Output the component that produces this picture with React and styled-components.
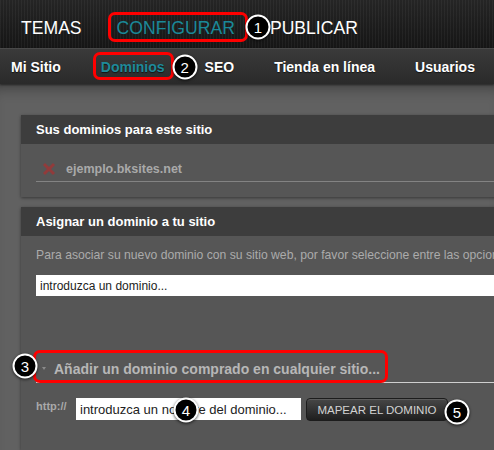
import React from 'react';
import styled, { createGlobalStyle } from 'styled-components';

const GlobalStyle = createGlobalStyle`
  html, body {
    margin: 0;
    padding: 0;
    background: #616161;
    overflow: hidden;
  }
  body {
    font-family: "Liberation Sans", Arial, Helvetica, sans-serif;
  }
  * { box-sizing: border-box; }
`;

const Page = styled.div`
  width: 494px;
  height: 450px;
  overflow: hidden;
  display: flex;
  flex-direction: column;
  background: #616161;
`;

/* ---------- primary navigation ---------- */
const TopBar = styled.nav`
  flex: none;
  height: 49px;
  display: flex;
  align-items: center;
  gap: 35px;
  padding: 8px 0 0 21px;
  background:
    repeating-linear-gradient(90deg, rgba(255, 255, 255, 0.045) 0 1px, transparent 1px 3px),
    linear-gradient(#252525, #151515);
  border-bottom: 1px solid #4c4c4c;
`;

const TopLink = styled.span`
  position: relative;
  font-size: 17.6px;
  line-height: 20px;
  color: ${(p) => (p.$active ? '#1a8999' : '#ffffff')};
`;

/* ---------- secondary navigation ---------- */
const SubNav = styled.nav`
  flex: none;
  height: 35px;
  display: flex;
  align-items: center;
  gap: 40px;
  padding: 1px 0 0 11px;
  background: linear-gradient(#3a3a3a, #2a2a2a);
  box-shadow: 0 1px 2px rgba(0, 0, 0, 0.5);
  position: relative;
  z-index: 1;
`;

const SubLink = styled.span`
  position: relative;
  font-size: 14px;
  line-height: 16px;
  font-weight: bold;
  color: ${(p) => (p.$active ? '#1f8a99' : '#ffffff')};
  text-shadow: 0 1px 1px rgba(0, 0, 0, 0.6);
`;

/* ---------- annotation marks ---------- */
const Marked = styled.span`
  position: relative;
  display: ${(p) => p.$display || 'inline-block'};

  &::after {
    content: '';
    position: absolute;
    inset: ${(p) => p.$inset};
    border: 3px solid #ff0000;
    border-radius: 7px;
    pointer-events: none;
  }
`;

const Callout = styled.span`
  position: absolute;
  left: ${(p) => p.$left};
  top: ${(p) => p.$top || '50%'};
  transform: translate(-50%, -50%);
  width: 25px;
  height: 25px;
  border-radius: 50%;
  background: #000;
  border: 2px solid #fff;
  box-shadow: 0 1px 3px rgba(0, 0, 0, 0.7);
  color: #fff;
  font-family: "Liberation Sans", Arial, sans-serif;
  font-weight: normal;
  font-size: 15px;
  line-height: 21px;
  text-align: center;
  text-shadow: none;
  z-index: 5;
`;

/* ---------- content ---------- */
const Main = styled.main`
  flex: 1;
  display: flex;
  flex-direction: column;
  gap: 10px;
  padding: 31px 0 0 21px;
  background: #616161;
  box-shadow: inset 0 14px 14px -10px rgba(0, 0, 0, 0.35);
`;

const Panel = styled.section`
  margin-right: -60px;
  background: #565656;
  box-shadow: 0 1px 3px rgba(0, 0, 0, 0.45);
  ${(p) => p.$grow && 'flex: 1;'}
`;

const PanelHeader = styled.header`
  height: 29px;
  display: flex;
  align-items: center;
  padding-left: 15px;
  background: #3d3d3d;
  color: #ffffff;
  font-size: 13px;
  font-weight: bold;
`;

const PanelBody = styled.div`
  padding: ${(p) => p.$pad};
`;

const DomainRow = styled.div`
  height: 25px;
  display: flex;
  align-items: center;
  gap: 10px;
  padding-left: 6px;
  border-bottom: 1px solid #838383;
`;

const DomainName = styled.span`
  font-size: 12.5px;
  font-weight: bold;
  color: #a9a9a9;
`;

const Description = styled.p`
  margin: 0;
  font-size: 12.2px;
  line-height: 14px;
  color: #ababab;
  white-space: nowrap;
`;

const TextField = styled.input`
  display: block;
  width: ${(p) => p.$width || '100%'};
  height: ${(p) => p.$height || '21px'};
  margin: ${(p) => p.$margin || '0'};
  padding: 0 4px;
  border: none;
  outline: none;
  background: #ffffff;
  color: #222222;
  font-family: "Liberation Sans", Arial, sans-serif;
  font-size: ${(p) => p.$size || '12px'};
`;

const HeadingRow = styled.div`
  margin-top: 54px;
  height: 33px;
  display: flex;
  align-items: stretch;
  border-bottom: 1px solid #cfcfcf;
`;

const HeadingInner = styled.span`
  display: flex;
  align-items: center;
  gap: 8px;
  padding: 5px 0 0 6px;
  font-size: 14px;
  font-weight: bold;
  color: #b7b7b7;
`;

const Caret = styled.span`
  width: 0;
  height: 0;
  border-left: 2.5px solid transparent;
  border-right: 2.5px solid transparent;
  border-top: 3px solid #8a8a8a;
`;

const FormRow = styled.div`
  margin-top: 15px;
  display: flex;
  align-items: flex-start;
`;

const Prefix = styled.span`
  width: 40px;
  padding-top: 2px;
  font-size: 11px;
  font-weight: bold;
  color: #a9a9a9;
`;

const FieldWrap = styled.span`
  position: relative;
  display: block;
`;

const MapButton = styled.button`
  position: relative;
  margin-left: 5px;
  width: 142px;
  height: 23px;
  padding: 0;
  border: 1px solid #1c1c1c;
  border-radius: 4px;
  background: linear-gradient(#474747, #1f1f1f);
  box-shadow: inset 0 1px 0 rgba(255, 255, 255, 0.12);
  color: #d2d2d2;
  font-family: "Liberation Sans", Arial, sans-serif;
  font-size: 11.5px;
`;

const RemoveIcon = () => (
  <svg width="14" height="14" viewBox="0 0 14 14">
    <path d="M2 2 L12 12 M12 2 L2 12" stroke="#913b3b" strokeWidth="3" strokeLinecap="butt" />
  </svg>
);

export default function App() {
  return (
    <Page>
      <GlobalStyle />
      <TopBar>
        <TopLink>TEMAS</TopLink>
        <Marked $inset="-6px -13px -4px -9px">
          <TopLink $active>CONFIGURAR</TopLink>
          <Callout $left="calc(100% + 23px)" $top="calc(50% - 1px)">1</Callout>
        </Marked>
        <TopLink>PUBLICAR</TopLink>
      </TopBar>

      <SubNav>
        <SubLink>Mi Sitio</SubLink>
        <Marked $inset="-6px -9px -4px -8px">
          <SubLink $active>Dominios</SubLink>
          <Callout $left="calc(100% + 20px)">2</Callout>
        </Marked>
        <SubLink>SEO</SubLink>
        <SubLink>Tienda en línea</SubLink>
        <SubLink>Usuarios</SubLink>
      </SubNav>

      <Main>
        <Panel>
          <PanelHeader>Sus dominios para este sitio</PanelHeader>
          <PanelBody $pad="13px 0 15px 15px">
            <DomainRow>
              <RemoveIcon />
              <DomainName>ejemplo.bksites.net</DomainName>
            </DomainRow>
          </PanelBody>
        </Panel>

        <Panel $grow>
          <PanelHeader>Asignar un dominio a tu sitio</PanelHeader>
          <PanelBody $pad="12px 0 0 15px">
            <Description>
              Para asociar su nuevo dominio con su sitio web, por favor seleccione entre las opciones siguientes.
            </Description>
            <TextField readOnly defaultValue="introduzca un dominio..." $margin="13px 0 0 0" />

            <HeadingRow>
              <Marked $display="flex" $inset="0 -8px -1px -3px">
                <HeadingInner>
                  <Caret />
                  Añadir un dominio comprado en cualquier sitio...
                </HeadingInner>
                <Callout $left="-11px">3</Callout>
              </Marked>
            </HeadingRow>

            <FormRow>
              <Prefix>http://</Prefix>
              <FieldWrap>
                <TextField
                  readOnly
                  defaultValue="introduzca un nombre del dominio..."
                  $width="225px"
                  $height="22px"
                  $size="13px"
                />
                <Callout $left="110px" $top="calc(50% + 1px)">4</Callout>
              </FieldWrap>
              <MapButton type="button">
                MAPEAR EL DOMINIO
                <Callout $left="calc(100% + 10px)" $top="calc(50% + 2px)">5</Callout>
              </MapButton>
            </FormRow>
          </PanelBody>
        </Panel>
      </Main>
    </Page>
  );
}
